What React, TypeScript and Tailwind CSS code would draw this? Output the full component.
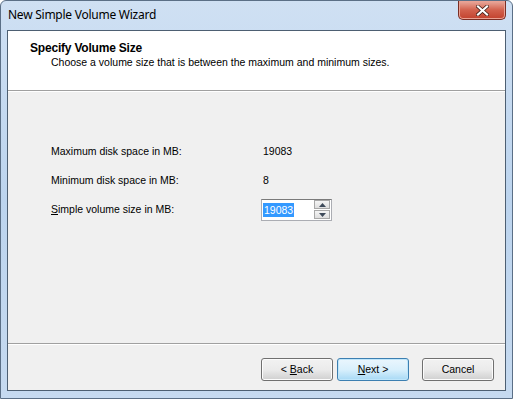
import React from "react";

const Label = ({ children }: { children: React.ReactNode }) => (
  <div className="w-[212px] shrink-0">{children}</div>
);

const WizButton = ({
  children,
  primary,
}: {
  children: React.ReactNode;
  primary?: boolean;
}) => (
  <div
    className={
      primary
        ? "w-[72px] h-[23px] flex items-center justify-center rounded-[3px] border border-[#3c7fb1] bg-gradient-to-b from-[#eaf6fd] via-[#d9f0fc] to-[#a7d9f5] shadow-[inset_0_0_0_1px_#bfe6fb]"
        : "w-[72px] h-[23px] flex items-center justify-center rounded-[3px] border border-[#707070] bg-gradient-to-b from-[#f2f2f2] via-[#ebebeb] to-[#cfcfcf] shadow-[inset_0_0_0_1px_#fcfcfc]"
    }
  >
    <span>{children}</span>
  </div>
);

export default function App() {
  return (
    <div className="w-[513px] h-[399px] overflow-hidden flex flex-col rounded-t-[6px] border border-[#5b6f86] bg-gradient-to-b from-[#cfe0f3] via-[#bcd4ee] to-[#c6daf0] font-['Liberation_Sans',Arial,sans-serif] text-[10.5px] text-black">
      {/* title bar */}
      <div className="h-[29px] shrink-0 flex items-start">
        <div className="pl-[7px] pt-[6px] text-[12px] font-['Noto_Sans',sans-serif] tracking-[-0.25px] text-black leading-[16px]">
          New Simple Volume Wizard
        </div>
        <div className="ml-auto mr-[6px] w-[48px] h-[19px] flex items-center justify-center rounded-b-[5px] border border-t-0 border-[#7a2e24] bg-gradient-to-b from-[#e9ab9f] via-[#d2614d] to-[#c2412d] shadow-[inset_0_0_0_1px_#eaa294]">
          <svg width="13" height="11" viewBox="0 0 13 11">
            <path
              d="M2 1.5 L11 9.5 M11 1.5 L2 9.5"
              stroke="#3a1a14"
              strokeWidth="3.6"
              strokeLinecap="square"
            />
            <path
              d="M2 1.5 L11 9.5 M11 1.5 L2 9.5"
              stroke="#ffffff"
              strokeWidth="2.2"
              strokeLinecap="square"
            />
          </svg>
        </div>
      </div>

      {/* client */}
      <div className="mx-[6px] flex-1 flex flex-col border border-[#4d5f72] bg-[#f0f0f0]">
        <div className="h-[59px] shrink-0 bg-white pl-[22px] pt-[10px]">
          <div className="font-bold text-[12px] tracking-[-0.2px] leading-[14px]">
            Specify Volume Size
          </div>
          <div className="pl-[21px] pt-[1px] leading-[13px]">
            Choose a volume size that is between the maximum and minimum sizes.
          </div>
        </div>
        <div className="h-[2px] shrink-0 border-t border-[#a0a0a0] border-b border-b-white"></div>

        <div className="flex-1 flex flex-col pl-[43px] pt-[53px] gap-[16px]">
          <div className="flex items-center h-[13px]">
            <Label>Maximum disk space in MB:</Label>
            <div>19083</div>
          </div>
          <div className="flex items-center h-[13px]">
            <Label>Minimum disk space in MB:</Label>
            <div>8</div>
          </div>
          <div className="flex items-center h-[13px]">
            <Label>
              <span className="underline">S</span>imple volume size in MB:
            </Label>
            <div className="-ml-[2px] flex h-[22px] w-[71px] items-center border border-[#abadb3] border-t-[#7a7a7a] bg-white pl-[1px]">
              <span className="bg-[#3399ff] text-white leading-[14px] px-[1px]">
                19083
              </span>
              <div className="ml-auto mr-[1px] flex flex-col gap-[1px]">
                <div className="w-[16px] h-[9px] flex items-center justify-center border border-[#a8a8a8] bg-gradient-to-b from-[#f5f5f5] to-[#dedede]">
                  <svg width="7" height="4" viewBox="0 0 7 4">
                    <path d="M0 4 L3.5 0 L7 4 Z" fill="#3d4a5a" />
                  </svg>
                </div>
                <div className="w-[16px] h-[9px] flex items-center justify-center border border-[#a8a8a8] bg-gradient-to-b from-[#f5f5f5] to-[#dedede]">
                  <svg width="7" height="4" viewBox="0 0 7 4">
                    <path d="M0 0 L3.5 4 L7 0 Z" fill="#3d4a5a" />
                  </svg>
                </div>
              </div>
            </div>
          </div>
        </div>

        <div className="h-[2px] shrink-0 border-t border-[#a0a0a0] border-b border-b-white"></div>
        <div className="h-[45px] shrink-0 flex items-start pt-[13px] pl-[253px] gap-[4px]">
          <WizButton>
            &lt; <span className="underline">B</span>ack
          </WizButton>
          <WizButton primary>
            <span className="underline">N</span>ext &gt;
          </WizButton>
          <div className="w-[5px]"></div>
          <WizButton>Cancel</WizButton>
        </div>
      </div>
      <div className="h-[7px] shrink-0"></div>
    </div>
  );
}
